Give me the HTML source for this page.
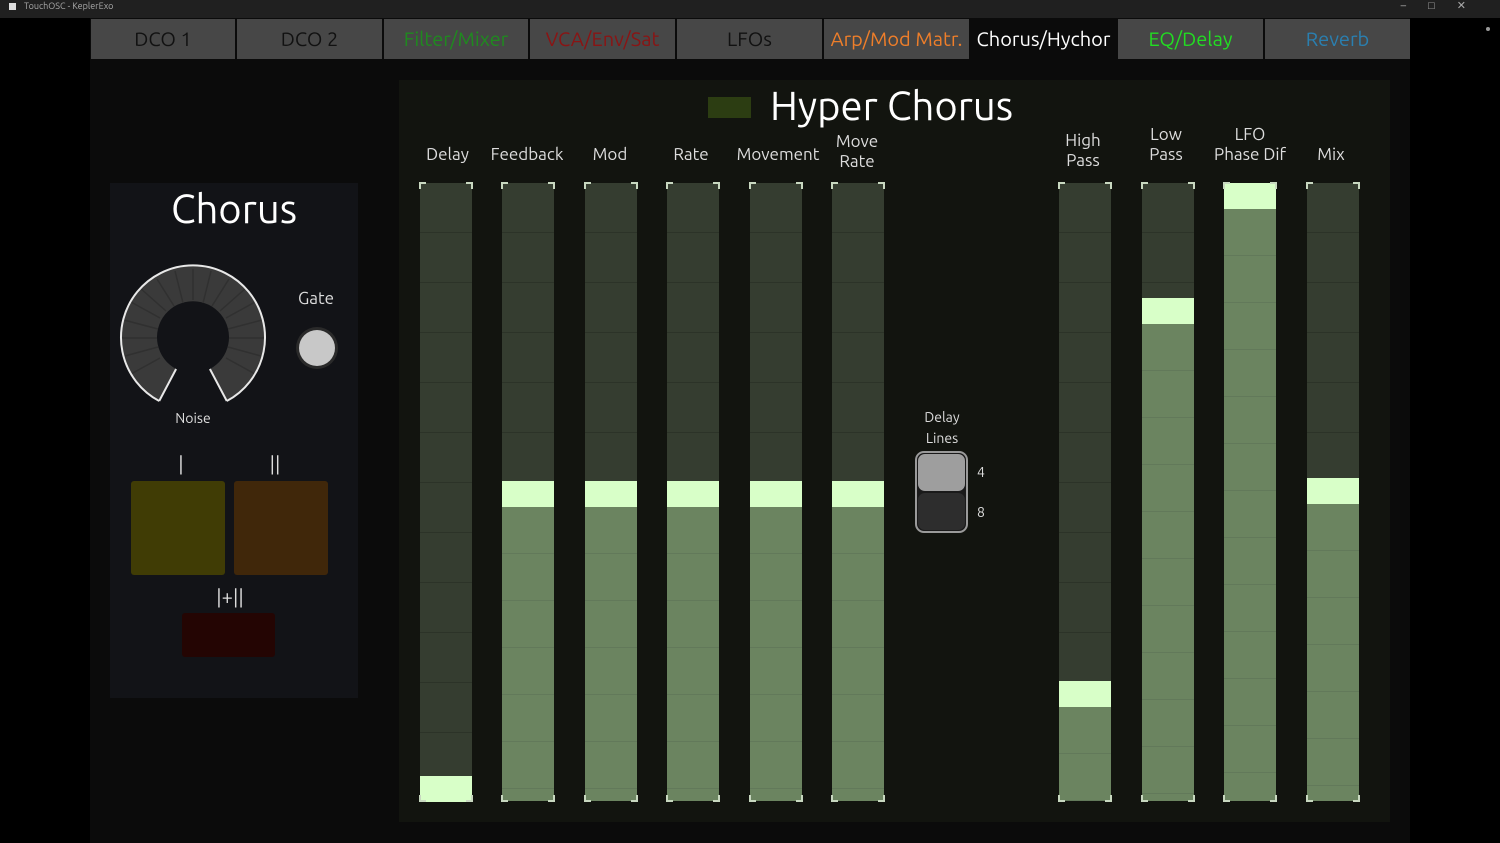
<!DOCTYPE html>
<html><head><meta charset="utf-8"><style>
*{margin:0;padding:0;box-sizing:border-box}
body{width:1500px;height:843px;background:#000;font-family:"Ubuntu","Liberation Sans",sans-serif;overflow:hidden;position:relative;color:#ddd}
.abs{position:absolute}
.tb{left:0;top:0;width:1500px;height:18px;background:#202020;font-size:9px;color:#aaa;line-height:13px;padding-left:24px}
.tab{position:absolute;top:19px;height:40px;background:#474747;font-size:20px;text-align:center;line-height:40px}
.lbl{position:absolute;font-size:17px;color:#ddd;text-align:center;line-height:20px}
.sl{position:absolute;top:183px;width:52px;height:618px;background:#353d30;
background-image:repeating-linear-gradient(to bottom,transparent 0,transparent 49px,#2c3328 49px,#2c3328 50px)}
.fill{position:absolute;left:0;right:0;bottom:0;background:#6b8460;
background-image:repeating-linear-gradient(to bottom,transparent 0,transparent 46px,#62795a 46px,#62795a 47px)}
.h{position:absolute;left:0;right:0;height:26px;background:#d8ffc8}
.cr{position:absolute;left:-1px;top:-1px;width:54px;height:620px;
background:linear-gradient(#c8d8c0,#c8d8c0) 0 0/7px 2px no-repeat,linear-gradient(#c8d8c0,#c8d8c0) 0 0/2px 7px no-repeat,
linear-gradient(#c8d8c0,#c8d8c0) 100% 0/7px 2px no-repeat,linear-gradient(#c8d8c0,#c8d8c0) 100% 0/2px 7px no-repeat,
linear-gradient(#c8d8c0,#c8d8c0) 0 100%/7px 2px no-repeat,linear-gradient(#c8d8c0,#c8d8c0) 0 100%/2px 7px no-repeat,
linear-gradient(#c8d8c0,#c8d8c0) 100% 100%/7px 2px no-repeat,linear-gradient(#c8d8c0,#c8d8c0) 100% 100%/2px 7px no-repeat}
</style></head><body>
<div class="abs tb">TouchOSC - KeplerExo<span style="position:absolute;left:9px;top:3px;width:7px;height:7px;background:#ddd"></span>
<span style="position:absolute;right:12px;top:0;font-size:11px;color:#aaa;letter-spacing:22px">–□✕</span></div>
<div class="abs" style="left:90px;top:18px;width:1320px;height:825px;background:#0b0b0b"></div>
<div class="abs" style="left:1486px;top:27px;width:4px;height:4px;border-radius:2px;background:#999"></div>

<div class="tab" style="left:91px;width:144px;color:#111">DCO 1</div>
<div class="tab" style="left:237px;width:145px;color:#111">DCO 2</div>
<div class="tab" style="left:384px;width:144px;color:#1f8a1f">Filter/Mixer</div>
<div class="tab" style="left:530px;width:145px;color:#8a1414">VCA/Env/Sat</div>
<div class="tab" style="left:677px;width:145px;color:#111">LFOs</div>
<div class="tab" style="left:824px;width:145px;color:#ee7e2a">Arp/Mod Matr.</div>
<div class="tab" style="left:971px;width:145px;background:#0b0b0b;color:#fff">Chorus/Hychor</div>
<div class="tab" style="left:1118px;width:145px;color:#22dd22">EQ/Delay</div>
<div class="tab" style="left:1265px;width:145px;color:#2a7fb0">Reverb</div>

<!-- left panel -->
<div class="abs" style="left:110px;top:183px;width:248px;height:515px;background:#121317"></div>
<div class="abs" style="left:110px;top:183px;width:248px;text-align:center;font-size:40px;color:#fff;line-height:52px">Chorus</div>
<svg class="abs" style="left:110px;top:250px" width="170" height="170" viewBox="110 250 170 170">
<path d="M159.2,401 A72,72 0 1 1 226.8,401 L209.9,369 A36,36 0 1 0 176.1,369 Z" fill="#3a3a3a"/>
<g stroke="#303030" stroke-width="1.5">
<path d="M193,269 L193,300 M157,279 L174,306 M131,302 L160,318 M122,338 L157,338 M131,374 L160,358 M229,279 L212,306 M255,302 L226,318 M264,338 L229,338 M255,374 L226,358 M175,271 L183,303 M211,271 L203,303 M140,288 L166,311 M246,288 L220,311 M124,320 L158,329 M262,320 L228,329 M125,356 L158,347 M261,356 L228,347"/>
</g>
<path d="M159.2,401 A72,72 0 1 1 226.8,401" fill="none" stroke="#e8e8e8" stroke-width="2"/>
<path d="M159.2,401 L176.1,369 M226.8,401 L209.9,369" stroke="#e8e8e8" stroke-width="2"/>
</svg>
<div class="lbl" style="left:153px;top:408px;width:80px;font-size:14px">Noise</div>
<div class="lbl" style="left:286px;top:289px;width:60px">Gate</div>
<div class="abs" style="left:296px;top:327px;width:42px;height:42px;border-radius:50%;background:#2a2a2a"></div>
<div class="abs" style="left:299px;top:330px;width:36px;height:36px;border-radius:50%;background:#c8c8c8"></div>
<div class="lbl" style="left:161px;top:454px;width:40px;font-size:20px">|</div>
<div class="lbl" style="left:255px;top:454px;width:40px;font-size:20px">||</div>
<div class="abs" style="left:131px;top:481px;width:94px;height:94px;border-radius:3px;background:#403c05"></div>
<div class="abs" style="left:234px;top:481px;width:94px;height:94px;border-radius:3px;background:#40270a"></div>
<div class="lbl" style="left:190px;top:587px;width:80px;font-size:20px">|+||</div>
<div class="abs" style="left:182px;top:613px;width:93px;height:44px;border-radius:3px;background:#240503"></div>

<!-- right panel -->
<div class="abs" style="left:399px;top:80px;width:991px;height:742px;background:#12140f"></div>
<div class="abs" style="left:708px;top:97px;width:43px;height:21px;background:#2c3d12"></div>
<div class="abs" style="left:770px;top:82px;font-size:40px;color:#fff;line-height:48px">Hyper Chorus</div>

<div class="lbl" style="left:410px;top:145px;width:75px">Delay</div>
<div class="lbl" style="left:482px;top:145px;width:90px">Feedback</div>
<div class="lbl" style="left:575px;top:145px;width:70px">Mod</div>
<div class="lbl" style="left:656px;top:145px;width:70px">Rate</div>
<div class="lbl" style="left:730px;top:145px;width:96px">Movement</div>
<div class="lbl" style="left:822px;top:132px;width:70px">Move<br>Rate</div>
<div class="lbl" style="left:1048px;top:131px;width:70px">High<br>Pass</div>
<div class="lbl" style="left:1131px;top:125px;width:70px">Low<br>Pass</div>
<div class="lbl" style="left:1204px;top:125px;width:92px">LFO<br>Phase Dif</div>
<div class="lbl" style="left:1296px;top:145px;width:70px">Mix</div>

<div class="sl" style="left:420px"><div class="fill" style="top:619px"></div><div class="h" style="top:593px"></div><div class="cr"></div></div>
<div class="sl" style="left:502px"><div class="fill" style="top:324px"></div><div class="h" style="top:298px"></div><div class="cr"></div></div>
<div class="sl" style="left:585px"><div class="fill" style="top:324px"></div><div class="h" style="top:298px"></div><div class="cr"></div></div>
<div class="sl" style="left:667px"><div class="fill" style="top:324px"></div><div class="h" style="top:298px"></div><div class="cr"></div></div>
<div class="sl" style="left:750px"><div class="fill" style="top:324px"></div><div class="h" style="top:298px"></div><div class="cr"></div></div>
<div class="sl" style="left:832px"><div class="fill" style="top:324px"></div><div class="h" style="top:298px"></div><div class="cr"></div></div>
<div class="sl" style="left:1059px"><div class="fill" style="top:524px"></div><div class="h" style="top:498px"></div><div class="cr"></div></div>
<div class="sl" style="left:1142px"><div class="fill" style="top:141px"></div><div class="h" style="top:115px"></div><div class="cr"></div></div>
<div class="sl" style="left:1224px"><div class="fill" style="top:26px"></div><div class="h" style="top:0px"></div><div class="cr"></div></div>
<div class="sl" style="left:1307px"><div class="fill" style="top:321px"></div><div class="h" style="top:295px"></div><div class="cr"></div></div>

<div class="lbl" style="left:906px;top:407px;width:72px;font-size:14px;line-height:21px">Delay<br>Lines</div>
<div class="abs" style="left:915px;top:451px;width:53px;height:82px;border:2px solid #9a9a9a;border-radius:9px;background:#1a1a1a"></div>
<div class="abs" style="left:918px;top:454px;width:47px;height:37px;border-radius:7px;background:#9e9e9e"></div>
<div class="abs" style="left:918px;top:493px;width:47px;height:37px;border-radius:7px;background:#2d2d2d"></div>
<div class="lbl" style="left:973px;top:462px;width:16px;font-size:14px">4</div>
<div class="lbl" style="left:973px;top:502px;width:16px;font-size:14px">8</div>
</body></html>
